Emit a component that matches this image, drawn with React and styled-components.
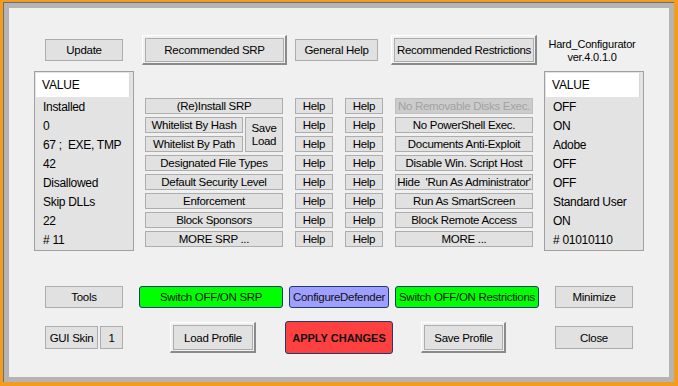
import React from "react";
import styled, { createGlobalStyle } from "styled-components";

const GlobalStyle = createGlobalStyle`
  html, body {
    margin: 0;
    padding: 0;
    background: #f0f0f0;
  }
  body {
    font-family: "Liberation Sans", Arial, sans-serif;
    color: #000;
  }
`;

const Frame = styled.div`
  width: 678px;
  height: 386px;
  box-sizing: border-box;
  border-style: solid;
  border-color: #f29d1f;
  border-width: 2px 4px 4px 3px;
  background: #b4b4b4;
  box-shadow: inset 1px 1px 0 #6d6d6d;
  padding: 6px 5px 5px 6px;
  display: flex;
`;

const Panel = styled.div`
  flex: 1;
  background: #f0f0f0;
  box-sizing: border-box;
  padding-top: 27px;
  display: flex;
  flex-direction: column;
`;

const Row = styled.div`
  display: flex;
  align-items: ${(p) => p.$align || "center"};
  height: ${(p) => p.$h}px;
  margin-top: ${(p) => p.$mt || 0}px;
`;

const FlatButton = styled.div`
  box-sizing: border-box;
  width: ${(p) => p.$w}px;
  height: ${(p) => p.$h || 22}px;
  margin-left: ${(p) => p.$ml || 0}px;
  background: #e1e1e1;
  border: 1px solid #adadad;
  display: flex;
  align-items: center;
  justify-content: center;
  font-size: 11.5px;
  letter-spacing: -0.3px;
  white-space: nowrap;
`;

const RaisedButton = styled.div`
  box-sizing: border-box;
  width: ${(p) => p.$w}px;
  height: ${(p) => p.$h || 30}px;
  margin-left: ${(p) => p.$ml || 0}px;
  border-style: solid;
  border-width: 1px 2px 2px 1px;
  border-color: #ffffff #8a8a8a #8a8a8a #ffffff;
  padding: 2px 1px 1px 2px;
  display: flex;
`;

const RaisedFace = styled.div`
  flex: 1;
  background: #e1e1e1;
  border: 1px solid #adadad;
  display: flex;
  align-items: center;
  justify-content: center;
  font-size: 11.5px;
  letter-spacing: -0.3px;
  white-space: nowrap;
`;

const ColorButton = styled.div`
  box-sizing: border-box;
  width: ${(p) => p.$w}px;
  height: ${(p) => p.$h || 22}px;
  margin-left: ${(p) => p.$ml || 0}px;
  background: ${(p) => p.$bg};
  border: 1px solid #1d3d70;
  border-radius: 3px;
  display: flex;
  align-items: center;
  justify-content: center;
  font-size: ${(p) => (p.$bold ? "11px" : "11.5px")};
  font-weight: ${(p) => (p.$bold ? 700 : 400)};
  letter-spacing: ${(p) => (p.$bold ? "0" : "-0.3px")};
  color: #111;
  white-space: nowrap;
`;

const Title = styled.div`
  width: 110px;
  margin-left: ${(p) => p.$ml || 0}px;
  text-align: center;
  font-size: 11px;
  line-height: 13px;
  letter-spacing: -0.2px;
  align-self: flex-start;
  margin-top: 3px;
`;

const ListBox = styled.div`
  box-sizing: border-box;
  width: 100px;
  height: 180px;
  margin-left: ${(p) => p.$ml || 0}px;
  background: #e3e3e3;
  border: 1px solid #a0a0a0;
  padding: 1px;
  display: flex;
  flex-direction: column;
`;

const ListHeader = styled.div`
  height: 24px;
  margin-right: 2px;
  background: #fff;
  border-right: 1px solid #d8d8d8;
  display: flex;
  align-items: center;
  padding-left: 6px;
  font-size: 12px;
  letter-spacing: -0.2px;
`;

const ListItem = styled.div`
  height: 19px;
  display: flex;
  align-items: center;
  padding-left: 7px;
  font-size: 12px;
  letter-spacing: -0.3px;
  white-space: pre;
`;

const ButtonGrid = styled.div`
  margin-left: ${(p) => p.$ml || 0}px;
  padding-top: 27px;
  display: grid;
  grid-template-columns: 138px 38px 38px 138px;
  grid-auto-rows: 16px;
  column-gap: 12px;
  row-gap: 3px;
  align-self: flex-start;
`;

const GridButton = styled.div`
  box-sizing: border-box;
  grid-column: ${(p) => p.$col};
  background: ${(p) => (p.$disabled ? "#cccccc" : "#e1e1e1")};
  border: 1px solid ${(p) => (p.$disabled ? "#bfbfbf" : "#adadad")};
  color: ${(p) => (p.$disabled ? "#a3a3a3" : "#000")};
  display: flex;
  align-items: center;
  justify-content: center;
  font-size: 11.5px;
  letter-spacing: -0.3px;
  white-space: pre;
`;

const WhitelistGroup = styled.div`
  grid-column: 1;
  grid-row: span 2;
  display: grid;
  grid-template-columns: 98px 38px;
  grid-template-rows: 16px 16px;
  column-gap: 2px;
  row-gap: 3px;
`;

const SaveLoad = styled(GridButton)`
  grid-column: 2;
  grid-row: 1 / span 2;
  flex-direction: column;
  line-height: 13px;
  padding-top: 1px;
`;

const srpButtons = [
  "(Re)Install SRP",
  null,
  null,
  "Designated File Types",
  "Default Security Level",
  "Enforcement",
  "Block Sponsors",
  "MORE SRP ...",
];

const restrictionButtons = [
  "No Removable Disks Exec.",
  "No PowerShell Exec.",
  "Documents Anti-Exploit",
  "Disable Win. Script Host",
  "Hide  'Run As Administrator'",
  "Run As SmartScreen",
  "Block Remote Access",
  "MORE ...",
];

const leftValues = [
  "Installed",
  "0",
  "67 ;  EXE, TMP",
  "42",
  "Disallowed",
  "Skip DLLs",
  "22",
  "# 11",
];

const rightValues = [
  "OFF",
  "ON",
  "Adobe",
  "OFF",
  "OFF",
  "Standard User",
  "ON",
  "# 01010110",
];

function ValueList({ items, ml }) {
  return (
    <ListBox $ml={ml}>
      <ListHeader>VALUE</ListHeader>
      {items.map((v, i) => (
        <ListItem key={i}>{v}</ListItem>
      ))}
    </ListBox>
  );
}

export default function App() {
  return (
    <>
      <GlobalStyle />
      <Frame>
        <Panel>
          <Row $h={30}>
            <FlatButton $w={78} $ml={36}>Update</FlatButton>
            <RaisedButton $w={145} $ml={19}>
              <RaisedFace>Recommended SRP</RaisedFace>
            </RaisedButton>
            <FlatButton $w={83} $ml={8}>General Help</FlatButton>
            <RaisedButton $w={146} $ml={13}>
              <RaisedFace>Recommended Restrictions</RaisedFace>
            </RaisedButton>
            <Title>
              Hard_Configurator
              <br />
              ver.4.0.1.0
            </Title>
          </Row>

          <Row $h={180} $mt={6} $align="flex-start">
            <ValueList items={leftValues} ml={25} />
            <ButtonGrid $ml={11}>
              {srpButtons.map((label, i) => {
                if (i === 1) {
                  return (
                    <WhitelistGroup key="wl">
                      <GridButton $col={1}>Whitelist By Hash</GridButton>
                      <SaveLoad>
                        <span>Save</span>
                        <span>Load</span>
                      </SaveLoad>
                      <GridButton $col={1}>Whitelist By Path</GridButton>
                    </WhitelistGroup>
                  );
                }
                if (i === 2) return null;
                return (
                  <GridButton key={i} $col={1} style={{ gridRow: i + 1 }}>
                    {label}
                  </GridButton>
                );
              })}
              {restrictionButtons.map((label, i) => (
                <React.Fragment key={label}>
                  <GridButton $col={2} style={{ gridRow: i + 1 }}>Help</GridButton>
                  <GridButton $col={3} style={{ gridRow: i + 1 }}>Help</GridButton>
                  <GridButton $col={4} $disabled={i === 0} style={{ gridRow: i + 1 }}>
                    {label}
                  </GridButton>
                </React.Fragment>
              ))}
            </ButtonGrid>
            <ValueList items={rightValues} ml={11} />
          </Row>

          <Row $h={22} $mt={35}>
            <FlatButton $w={78} $ml={36}>Tools</FlatButton>
            <ColorButton $w={144} $ml={16} $bg="#00ff00">Switch OFF/ON SRP</ColorButton>
            <ColorButton $w={100} $ml={6} $bg="#9f9fff">ConfigureDefender</ColorButton>
            <ColorButton $w={144} $ml={6} $bg="#00ff00">Switch OFF/ON Restrictions</ColorButton>
            <FlatButton $w={78} $ml={16}>Minimize</FlatButton>
          </Row>

          <Row $h={33} $mt={13}>
            <FlatButton $w={53} $h={23} $ml={36}>GUI Skin</FlatButton>
            <FlatButton $w={23} $h={23} $ml={2}>1</FlatButton>
            <RaisedButton $w={86} $h={31} $ml={47}>
              <RaisedFace>Load Profile</RaisedFace>
            </RaisedButton>
            <ColorButton $w={108} $h={33} $ml={29} $bg="#ff4040" $bold>
              APPLY CHANGES
            </ColorButton>
            <RaisedButton $w={85} $h={31} $ml={28}>
              <RaisedFace>Save Profile</RaisedFace>
            </RaisedButton>
            <FlatButton $w={78} $h={23} $ml={49}>Close</FlatButton>
          </Row>
        </Panel>
      </Frame>
    </>
  );
}
